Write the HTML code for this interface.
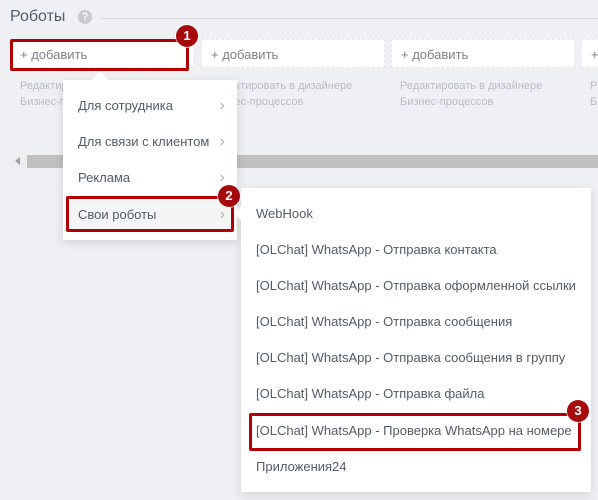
<!DOCTYPE html>
<html><head><meta charset="utf-8"><style>
*{margin:0;padding:0;box-sizing:border-box}
body{width:598px;height:500px;overflow:hidden;background:#eef0f3;font-family:"Liberation Sans",sans-serif;position:relative;color:#535c69}
.abs{position:absolute}
.card{position:absolute;top:39px;height:29px;width:184px;background:#fff;border:1px dashed #e3e6ea;font-size:13px;color:#7a828d;padding:7px 0 0 9px}
.desc{position:absolute;top:78px;font-size:11px;line-height:16px;color:#b8bdc5;white-space:nowrap}
.menu{position:absolute;background:#fff;box-shadow:0 3px 10px rgba(0,0,0,.12)}
.it{position:absolute;left:0;right:0;height:36px;line-height:38px;font-size:13px;color:#535c69;white-space:nowrap}
.arr{position:absolute;right:12px;top:0;color:#b0b4ba;font-size:16px}
.red{position:absolute;border:3px solid #b20000;border-radius:2px}
.badge{position:absolute;width:22px;height:22px;border-radius:50%;background:#a50b0b;color:#fff;font-weight:bold;font-size:13px;text-align:center;line-height:22px;box-shadow:0 0 0 1px rgba(255,255,255,.6)}
</style></head><body>
<div class="abs" style="left:10px;top:8px;font-size:16px;color:#535c69">Роботы</div>
<div class="abs" style="left:78px;top:10px;width:14px;height:14px;border-radius:50%;background:#c6c9ce;color:#fff;font-size:11px;font-weight:bold;text-align:center;line-height:14px">?</div>
<div class="abs" style="left:101px;top:18px;width:497px;height:1px;background:#d7dade"></div>

<div class="card" style="left:10px">+ добавить</div>
<div class="card" style="left:201px">+ добавить</div>
<div class="card" style="left:391px">+ добавить</div>
<div class="card" style="left:581px">+</div>
<div class="desc" style="left:20px">Редактировать в дизайнере<br>Бизнес-процессов</div>
<div class="desc" style="left:210px">Редактировать в дизайнере<br>Бизнес-процессов</div>
<div class="desc" style="left:400px">Редактировать в дизайнере<br>Бизнес-процессов</div>
<div class="desc" style="left:590px">Р<br>Б</div>

<div class="abs" style="left:10px;top:154px;width:17px;height:14px;background:#eceef0"></div>
<div class="abs" style="left:15px;top:157px;width:0;height:0;border-top:4px solid transparent;border-bottom:4px solid transparent;border-right:5px solid #9a9ea4"></div>
<div class="abs" style="left:27px;top:155px;width:571px;height:13px;background:#c0c0c0"></div>

<div class="red" style="left:10px;top:39px;width:179px;height:32px"></div>
<div class="badge" style="left:176px;top:25px">1</div>

<div class="menu" style="left:63px;top:80px;width:174px;height:160px">
 <div class="abs" style="left:31px;top:-6px;width:12px;height:12px;background:#fff;transform:rotate(45deg)"></div>
 <div class="it" style="top:7px;padding-left:15px">Для сотрудника<span class="arr">›</span></div>
 <div class="it" style="top:43px;padding-left:15px">Для связи с клиентом<span class="arr">›</span></div>
 <div class="it" style="top:79px;padding-left:15px">Реклама<span class="arr">›</span></div>
 <div class="it" style="top:116px;left:4px;right:4px;padding-left:11px;background:#f4f5f7">Свои роботы<span class="arr" style="right:8px">›</span></div>
</div>
<div class="red" style="left:66px;top:196px;width:168px;height:36px"></div>
<div class="badge" style="left:218px;top:185px">2</div>

<div class="menu" style="left:241px;top:188px;width:350px;height:304px">
 <div class="abs" style="left:-5px;top:20px;width:10px;height:10px;background:#fff;transform:rotate(45deg)"></div>
 <div class="it" style="top:7px;padding-left:15px">WebHook</div>
 <div class="it" style="top:43px;padding-left:15px">[OLChat] WhatsApp - Отправка контакта</div>
 <div class="it" style="top:79px;padding-left:15px">[OLChat] WhatsApp - Отправка оформленной ссылки</div>
 <div class="it" style="top:115px;padding-left:15px">[OLChat] WhatsApp - Отправка сообщения</div>
 <div class="it" style="top:151px;padding-left:15px">[OLChat] WhatsApp - Отправка сообщения в группу</div>
 <div class="it" style="top:187px;padding-left:15px">[OLChat] WhatsApp - Отправка файла</div>
 <div class="it" style="top:224px;padding-left:15px">[OLChat] WhatsApp - Проверка WhatsApp на номере</div>
 <div class="abs" style="left:10px;right:10px;top:260px;height:1px;background:#eef0f2"></div>
 <div class="it" style="top:260px;padding-left:15px">Приложения24</div>
</div>
<div class="red" style="left:249px;top:413px;width:332px;height:38px"></div>
<div class="badge" style="left:567px;top:400px">3</div>
</body></html>
